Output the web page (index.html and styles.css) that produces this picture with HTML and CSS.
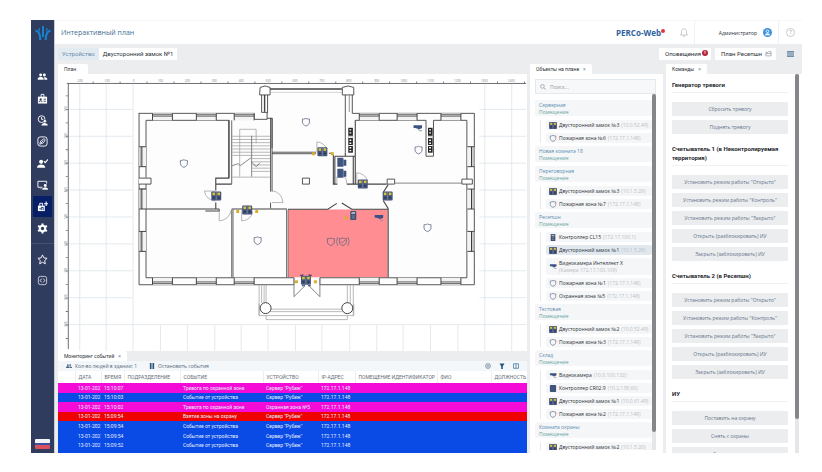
FILE: index.html
```html
<!DOCTYPE html>
<html lang="ru">
<head>
<meta charset="utf-8">
<title>PERCo-Web</title>
<link rel="stylesheet" href="styles.css">
</head>
<body>
<svg class="defs" aria-hidden="true">
  <defs>
    <g id="lock"><rect width="10" height="9" rx="1" fill="#44537a"/><path d="M5 0v9" stroke="#8791ab" stroke-width=".7"/><rect x="1.2" y="1" width="2.6" height="2.6" fill="#d6c53c"/><rect x="6.2" y="1" width="2.6" height="2.6" fill="#d6c53c"/><path d="M1.5 6.2h2M6.500 6.200h2" stroke="#222c4a"/></g>
    <g id="shield"><path d="M4 .5C5.200 1.300 6.500 1.200 7.500 1.200v3.200C7.500 6.300 6 7.400 4 8.200 2 7.400.5 6.300.5 4.400V1.200C1.500 1.200 2.800 1.300 4 .5z" fill="none" stroke="#5b6682" stroke-width=".8"/></g>
    <g id="camera"><path d="M0 .5h8.500v2.700L6 4.500 1.500 3.200H0z" fill="#3d5182"/><path d="M4.500 4.200 6 6h2.500" fill="none" stroke="#8791ab" stroke-width=".9"/></g>
    <g id="controller"><rect width="6" height="9" rx=".8" fill="#42506f"/><rect x="1.200" y="1" width="3.600" height="2" fill="#a9b4c8"/><path d="M1.500 5h3M1.500 7h3" stroke="#8c99b5" stroke-width=".8"/></g>
    <g id="people"><circle cx="4" cy="3" r="2" /><circle cx="9" cy="3" r="2"/><path d="M0 9.500V8c0-3 8-3 8 0v1.500zM9 9.500V8q0-1.300-.9-2.100C10.500 5.700 13 6.500 13 8v1.500z"/></g>
    <g id="alarmdot"><rect x="-1.500" y="-1.500" width="3" height="3" rx=".5" fill="#dcae25"/></g>
    <g id="window-h"><rect width="20" height="7" fill="#f3f3f3"/><path d="M0 0v7M20 0v7" stroke="#444"/><path d="M0 1.500h20" stroke="#333" stroke-width=".9"/><path d="M0 3h20" stroke="#555" stroke-width=".7"/></g>
    <g id="window-v"><rect width="7" height="20" fill="#f3f3f3"/><path d="M0 0h7M0 20h7" stroke="#444"/><path d="M1.200 0v20" stroke="#777" stroke-width=".7"/><path d="M2.800 0v20" stroke="#333"/></g>
    <g id="vents"><rect width="4.600" height="25" fill="#222"/><path d="M1.200 2h1.800M1.200 5h1.800M1.200 12.500h1.800M1.200 15.500h1.800M1.200 20h1.800M1.200 23h1.800" stroke="#fff" stroke-width="1.300"/><path d="M0 8.500h4.600M0 9.800h4.600M0 17.800h4.600" stroke="#fff"/></g>
  </defs>
</svg>
<div class="app">
  <aside class="sidebar">
    <svg class="logo" viewBox="0 0 16 14" aria-hidden="true"><g fill="none" stroke="#1583cf"><path d="M8 0v11" stroke-width="2"/><path d="M.6 4.500C4.200 5.500 5.400 9 5.200 14M15.400 4.500C11.800 5.500 10.600 9 10.800 14" stroke-width="2.200"/><path d="M4.200 2v3.500M11.800 2v3.500" stroke-width="1.200"/></g></svg>
    <nav class="nav" aria-label="Разделы">
      <a href="#" aria-label="Персонал"><svg viewBox="-1 -1 15 12"><use href="#people" fill="#fff"/></svg></a>
      <a href="#" aria-label="Бюро пропусков"><svg viewBox="0 0 12 12"><path d="M1 4h10v7.500H1z" fill="#fff"/><path d="M4.500 5V1.500h3V5" fill="none" stroke="#fff"/><circle cx="4" cy="7" r="1.200" fill="#303c5e"/><path d="M2.300 10c0-2 3.400-2 3.400 0M7.200 6.800h2.500M7.200 9h2.500" fill="none" stroke="#303c5e"/></svg></a>
      <a href="#" aria-label="Контроль доступа"><svg viewBox="0 0 12 12"><circle cx="5" cy="4.500" r="3.700" fill="none" stroke="#fff"/><path d="M5 2.200v2.600h2" fill="none" stroke="#fff"/><circle cx="8.500" cy="6.700" r="1.800" fill="#fff" stroke="#303c5e" stroke-width=".6"/><path d="M4.800 11.500c0-3.800 7-3.800 7 0z" fill="#fff"/></svg></a>
      <a href="#" aria-label="Учёт времени"><svg viewBox="0 0 12 12"><rect x="1" y="1" width="10" height="10" rx="2.500" fill="none" stroke="#fff"/><path d="M3 9 4 5.500 7.500 3l1.500 1-2 3.500zM4 8l3-3" fill="none" stroke="#fff" stroke-width=".9"/></svg></a>
      <a href="#" aria-label="Верификация"><svg viewBox="0 0 12 12"><circle cx="4.500" cy="4" r="2.200" fill="#fff"/><path d="M0 10.500c0-4.500 9-4.500 9 0z" fill="#fff"/><path d="M7.500 3.500 9 5l3-3.500" fill="none" stroke="#fff" stroke-width="1.200"/></svg></a>
      <a href="#" aria-label="Мониторинг"><svg viewBox="0 0 12 12"><path d="M6 9H1V2.500h9.500V5" fill="none" stroke="#fff"/><circle cx="9" cy="7" r="1.600" fill="#fff"/><path d="M6 11.500c0-3 6-3 6 0zM3 10.500h3" fill="#fff" stroke="#fff" stroke-width=".4"/></svg></a>
      <a href="#" class="active" aria-current="page" aria-label="Интерактивный план"><svg viewBox="0 0 12 12"><path d="M1 5h7.500v6H1z" fill="#fff"/><path d="M3 5V2.500h3V5" fill="none" stroke="#fff"/><path d="M2.500 8.500h1.700M4.700 10V7h2v3" stroke="#061f66" fill="none" stroke-width=".9"/><path d="M10 .5v5M7.500 3h5" stroke="#fff" stroke-width="1.200"/></svg></a>
      <a href="#" aria-label="Настройки"><svg viewBox="0 0 12 12"><circle cx="6" cy="6" r="3" fill="none" stroke="#fff" stroke-width="2.300"/><path d="M6 .5v2M6 9.500v2M1.200 3.200l1.800 1M9 7.800l1.800 1M1.200 8.800 3 7.800M9 4.200l1.800-1" stroke="#fff" stroke-width="2.200"/></svg></a>
    </nav>
    <nav class="nav nav-extra" aria-label="Дополнительно">
      <a href="#" aria-label="Избранное"><svg viewBox="0 0 12 12"><path d="m6 1 1.500 3.200 3.500.5-2.600 2.400.7 3.600L6 9l-3.100 1.700.7-3.600L1 4.700l3.500-.5z" fill="none" stroke="#fff" stroke-linejoin="round"/></svg></a>
      <a href="#" aria-label="Разработчику"><svg viewBox="0 0 12 12"><rect x="1.500" y="1.500" width="9" height="9" rx="2.200" fill="none" stroke="#dfe3ec" stroke-width=".9"/><path d="M5 4 3.500 6 5 8M7 4l1.500 2L7 8" fill="none" stroke="#fff" stroke-width=".9"/></svg></a>
    </nav>
    <button class="flag" type="button" aria-label="Язык"></button>
  </aside>

  <div class="workspace">
    <header class="header">
      <h1>Интерактивный план</h1>
      <div class="brand">PERCo-Web<i></i></div>
      <button class="bell" type="button" aria-label="Уведомления"><svg viewBox="0 0 8 9"><path d="M.5 7h7L6.500 5.500V3.500c0-3.500-5-3.500-5 0v2zM3 8.300h2" fill="none" stroke="#b5bac2" stroke-width=".8"/></svg></button>
      <button class="user" type="button">Администратор<svg viewBox="0 0 10 10"><circle cx="5" cy="5" r="5" fill="#3f93de"/><circle cx="5" cy="3.700" r="1.500" fill="none" stroke="#fff" stroke-width=".9"/><path d="M2.300 8c0-3 5.400-3 5.400 0z" fill="#fff"/></svg></button>
      <button class="help" type="button" aria-label="Справка">?</button>
    </header>

    <div class="toolbar">
      <div class="crumbs"><span class="crumb-label">Устройство</span><span>Двусторонний замок №1</span></div>
      <button class="chip" type="button">Оповещения<b>1</b></button>
      <button class="chip chip-plan" type="button">План Ресепшн<svg viewBox="0 0 8 7"><path d="M1 1.500h2.500l.7-.8H7v5H1zM1 3h6" fill="none" stroke="#7c8896" stroke-width=".7"/></svg></button>
      <button class="burger" type="button" aria-label="Меню"><svg viewBox="0 0 7 6"><path d="M0 .8h7M0 3h7M0 5.200h7" stroke="#466f92" stroke-width="1.200"/></svg></button>
    </div>

    <main class="columns">
      <div class="left">
        <section class="plan">
          <h2 class="tab">План</h2>
          <svg class="plan-canvas" viewBox="58 73 469 278" preserveAspectRatio="xMidYMin meet" role="img" aria-label="План этажа">
            <g stroke="#dce3ea" stroke-width=".8" fill="none">
              <path d="M79 83v268M105.500 83v268M132.500 83v268M485.500 83v268M512.500 83v268"/>
              <path d="M67 108.500h65M67 135.500h65M67 162.500h65M67 189.500h65M67 216.500h65M67 243.500h65M67 270.500h65M67 297.500h65M67 324.500h460"/>
              <path d="M480 108.500h47M480 135.500h47M480 162.500h47M480 189.500h47M480 216.500h47M480 243.500h47M480 270.500h47M480 297.500h47"/>
              <path d="M160 325v26M187 325v26M214.500 325v26M241 325v26M268 325v26M295.500 325v26M322 325v26M350 325v26M377 325v26M403.500 325v26M431 325v26M458.500 325v26"/>
            </g>
            <path d="M66 82.500h461M67.500 82v267" stroke="#6b6e73" fill="none"/>
            <path d="M92 81.500h435" stroke="#666" stroke-width="2" stroke-dasharray=".8 26.260"/>
            <path d="M66 94.500v255" stroke="#666" stroke-width="2" stroke-dasharray=".8 12.730"/>
            <g class="ruler">
              <text x="79" y="81">-200</text><text x="106" y="81">-100</text><text x="133" y="81">0</text><text x="160" y="81">100</text><text x="187" y="81">200</text><text x="214" y="81">300</text><text x="241" y="81">400</text><text x="268" y="81">500</text><text x="295" y="81">600</text><text x="322" y="81">700</text><text x="349" y="81">800</text><text x="377" y="81">900</text><text x="404" y="81">1000</text><text x="431" y="81">1100</text><text x="458" y="81">1200</text><text x="485" y="81">1300</text><text x="512" y="81">1400</text>
              <text transform="translate(66 108)rotate(-90)">100</text><text transform="translate(66 135)rotate(-90)">200</text><text transform="translate(66 162)rotate(-90)">300</text><text transform="translate(66 189)rotate(-90)">400</text><text transform="translate(66 216)rotate(-90)">500</text><text transform="translate(66 243)rotate(-90)">600</text><text transform="translate(66 270)rotate(-90)">700</text><text transform="translate(66 297)rotate(-90)">800</text><text transform="translate(66 324)rotate(-90)">900</text>
            </g>
            <path d="M138.500 112.500H254V118h8V93h-3v-8h11v3h72v-3h12v9h-2v18h123v172H138.500z" fill="#fdfdfd"/>
            <rect x="288" y="209" width="100" height="68" fill="#ff8d92"/>
            <g fill="none" stroke="#444" stroke-width=".9">
              <path d="M138.500 112.500H267M138.500 112v172.500H294M320 284.500h155V112.500H352.500"/>
              <path d="M145.500 119.500H229M145.500 119.500V177M145.500 183.500V277.500H294M320 277.500h147.500V119.500H434M426.500 119.500H355.500"/>
              <path d="M254 112.500v6h13v-7h-5.500V94M267.500 94v18M260 86.500q5-3 10 0v7.500h-10.500z" fill="#fff"/>
              <path d="M345.500 94v58M352.500 94v18.500M342.500 86.500q6-3 11.500 0V94H342.500z" fill="#fff"/>
              <path d="M270 88h72" stroke-width="1.500"/><path d="M270 91.500h72" stroke="#bbb" stroke-width=".6"/>
              <path d="M264.500 94v17" stroke-width="1.400"/><path d="M349.500 94v17" stroke="#888"/>
              <path d="M138.500 177.500h12v6h-12M138.500 188.500h7M473 178.500h-10.500v5H473zM387.500 178.500h7.500v5h-7.500zM302.500 177.500h7v6h-7z" fill="#fff"/>
              <path d="M145.500 208.500H219M231.500 208.500H287M219 208.500v2h-14M215.500 190v-12.500h13V119.500M215.500 183.500h16M215.500 202v6.500" stroke-width="1.100"/>
              <path d="M229 119.500v58M231.500 119.500v64M231.500 209v68M232.800 209v68" stroke="#555"/>
              <path d="M286.500 209v68M288 209v68" stroke="#666"/>
              <path d="M270.500 117v74M272 117v74M270.500 202v6M272 151.500h44M272 153h44M333 152.500h-4"/>
              <path d="M267 117.500h5v30" />
              <path d="M333.500 154v29.500h4M335 155.500v28M335 155.500h20.500M353.500 155.500v28M355.500 119.500v64M347 183.500H387M345.500 152v3" stroke-width="1.100"/>
              <path d="M395 182.500h68" stroke="#777"/>
              <path d="M426.500 119.500v36h7.500v-36"/>
              <path d="M388.500 184l-5 8M383.500 200l5 8v69M288 208.800h40l9-6M342 202.500l10 6.300h36.500" stroke-width="1.100"/>
              <path d="M294 277.500v19l11-11M320 277.500v19l-11-11M294 284.500v-7M320 284.500v-7" stroke="#777"/>
            </g>
            <g>
              <use href="#window-h" x="152" y="112.500"/><use href="#window-h" x="196" y="112.500"/><use href="#window-h" x="234" y="112.500"/>
              <use href="#window-h" x="359.500" y="112.500"/><use href="#window-h" x="397.500" y="112.500"/><use href="#window-h" x="441.500" y="112.500"/>
              <use href="#window-h" transform="translate(152 284.500)scale(1 -1)"/><use href="#window-h" transform="translate(196 284.500)scale(1 -1)"/><use href="#window-h" transform="translate(234 284.500)scale(1 -1)"/>
              <use href="#window-h" transform="translate(359.500 284.500)scale(1 -1)"/><use href="#window-h" transform="translate(397.500 284.500)scale(1 -1)"/><use href="#window-h" transform="translate(441.500 284.500)scale(1 -1)"/>
              <use href="#window-v" x="138.500" y="146"/><use href="#window-v" x="138.500" y="188.500"/><use href="#window-v" x="138.500" y="231"/>
              <use href="#window-v" transform="translate(475 146)scale(-1 1)"/><use href="#window-v" transform="translate(475 188.500)scale(-1 1)"/><use href="#window-v" transform="translate(475 231)scale(-1 1)"/>
              <use href="#vents" x="348.500" y="127"/><use href="#vents" x="428.500" y="127"/>
            </g>
            <g fill="none" stroke="#999" stroke-width=".7">
              <path d="M239.500 176V128.500h16.500v14M232 135.500h38M232 138.700h38M232 141.900h38M232 145.100h38M232 148.300h38M232 151.500h38M232 154.700h38M252 157.900h18M252 161.100h18M252 164.300h18M252 167.500h18M252 170.700h18M232 176.500h38"/>
              <path d="M251.500 135v41M232 165l6-2 2 2 11-8M251 161l5 5 4-4" stroke="#555"/>
              <path d="M204 190.500h11M204 190.500q2 9 11 10M219 209v11.500q10-1 12.500-12M241.500 210v10.500q10-1 11-9.500M272 190q10 2 11 12h-11M317 152v-11q7 1 10 7M357 183v-11q8 1 11 8M337 183v-7M347 183q0-5-3-8"/>
              <path d="M259 285v30.500M261.500 285v18M264 285v18M266 285v18M347.500 285v18M350.500 285v18M353.500 285v30.500"/>
              <path d="M259 303.500v12h95v-12M270 309h72M270 311.500h72M266 315.500v4h81.500v-4"/>
            </g>
            <g fill="#fff" stroke="#444"><circle cx="265.500" cy="308" r="5.500"/><circle cx="347.500" cy="308" r="5.500"/></g>
            <use href="#shield" x="179.500" y="158.500"/><use href="#shield" x="253.500" y="236"/><use href="#shield" x="302" y="117"/><use href="#shield" x="415" y="145"/><use href="#shield" x="424" y="223"/><use href="#shield" x="327" y="237"/><use href="#shield" x="339" y="237"/>
            <path d="m341 241 1.500 1.500 3-3M338 236.500q-3 4.500 0 9M348 236.500q3 4.500 0 9" fill="none" stroke="#5b6682" stroke-width=".7"/>
            <use href="#camera" x="414" y="124"/><use href="#camera" x="375" y="214"/>
            <use href="#controller" x="350.500" y="210.500"/>
            <use href="#lock" x="211" y="191"/><use href="#lock" x="242" y="205"/><use href="#lock" x="317.500" y="146.500"/><use href="#lock" x="358" y="179"/><use href="#lock" x="383" y="191"/><use href="#lock" x="301" y="275.500"/>
            <path d="M337.500 157h6v2h3v6h-3v1h-6zM337.500 168h6v2h3v6h-3v1h-6z" fill="#40547f"/><path d="M343.500 158v8M343.500 169v8" stroke="#8b98b4" stroke-width=".7"/>
            <path d="M300 275h3v-1M309 274v1h3M302 285.500h3M308 285.500h3" stroke="#303c5e" fill="none"/>
            <use href="#alarmdot" x="237.500" y="211"/><use href="#alarmdot" x="256.500" y="211"/><use href="#alarmdot" x="313.500" y="153"/><use href="#alarmdot" x="332.500" y="153"/><use href="#alarmdot" x="346.500" y="217.500"/><use href="#alarmdot" x="296.500" y="281.500"/><use href="#alarmdot" x="315.500" y="281.500"/>
          </svg>
        </section>

        <section class="events">
          <h2 class="tab">Мониторинг событий<button type="button" aria-label="Закрыть">×</button></h2>
          <div class="events-bar">
            <span class="count"><svg viewBox="0 0 13 10"><use href="#people" fill="#4c6580"/></svg>Кол-во людей в здании: 1</span>
            <button type="button" class="pause"><svg viewBox="0 0 5 6"><path d="M1.200 0v6M3.800 0v6" stroke="#31577c" stroke-width="1.700"/></svg>Остановить события</button>
            <button type="button" class="tool" aria-label="Настройки"><svg viewBox="0 0 6 6"><circle cx="3" cy="3" r="2.400" fill="none" stroke="#6e8293" stroke-width=".8"/><circle cx="3" cy="3" r="1" fill="none" stroke="#6e8293" stroke-width=".7"/></svg></button>
            <button type="button" class="tool" aria-label="Фильтр"><svg viewBox="0 0 6 6"><path d="M.5.5h5L3.800 3.200V6H2.200V3.200z" fill="#24557f"/></svg></button>
            <button type="button" class="tool" aria-label="Столбцы"><svg viewBox="0 0 6 6"><path d="M.5.8h5v4.500h-5zM3 .8v4.500" fill="none" stroke="#4b7ba5" stroke-width=".8"/></svg></button>
          </div>
          <table>
            <colgroup><col class="c-mark"><col class="c-date"><col class="c-time"><col class="c-dept"><col class="c-event"><col class="c-device"><col class="c-ip"><col class="c-room"><col class="c-name"><col class="c-post"></colgroup>
            <thead><tr><th></th><th>ДАТА</th><th>ВРЕМЯ</th><th>ПОДРАЗДЕЛЕНИЕ</th><th>СОБЫТИЕ</th><th>УСТРОЙСТВО</th><th>IP-АДРЕС</th><th>ПОМЕЩЕНИЕ ИДЕНТИФИКАТОР</th><th>ФИО</th><th>ДОЛЖНОСТЬ</th></tr></thead>
            <tbody>
              <tr class="alarm"><td></td><td>13-01-2021</td><td>15:10:07</td><td></td><td>Тревога по охранной зоне</td><td>Сервер "Рубеж"</td><td>172.17.1.148</td><td></td><td></td><td></td></tr>
              <tr><td></td><td>13-01-2021</td><td>15:10:03</td><td></td><td>Событие от устройства</td><td>Сервер "Рубеж"</td><td>172.17.1.148</td><td></td><td></td><td></td></tr>
              <tr class="alarm"><td></td><td>13-01-2021</td><td>15:10:02</td><td></td><td>Тревога по охранной зоне</td><td>Охранная зона №5</td><td>172.17.1.148</td><td></td><td></td><td></td></tr>
              <tr class="armed"><td></td><td>13-01-2021</td><td>15:09:54</td><td></td><td>Взятие зоны на охрану</td><td>Сервер "Рубеж"</td><td>172.17.1.148</td><td></td><td></td><td></td></tr>
              <tr><td></td><td>13-01-2021</td><td>15:09:54</td><td></td><td>Событие от устройства</td><td>Сервер "Рубеж"</td><td>172.17.1.148</td><td></td><td></td><td></td></tr>
              <tr><td></td><td>13-01-2021</td><td>15:09:54</td><td></td><td>Событие от устройства</td><td>Сервер "Рубеж"</td><td>172.17.1.148</td><td></td><td></td><td></td></tr>
              <tr><td></td><td>13-01-2021</td><td>15:09:52</td><td></td><td>Событие от устройства</td><td>Сервер "Рубеж"</td><td>172.17.1.148</td><td></td><td></td><td></td></tr>
            </tbody>
          </table>
        </section>
      </div>

      <section class="objects">
        <h2 class="tab">Объекты на плане<button type="button" aria-label="Закрыть">×</button></h2>
        <div class="objects-body">
          <label class="search"><svg viewBox="0 0 7 7"><circle cx="2.800" cy="2.800" r="2.200" fill="none" stroke="#7d8793" stroke-width=".7"/><path d="m4.500 4.500 2 2" stroke="#7d8793" stroke-width=".8"/></svg><input type="text" placeholder="Поиск..." aria-label="Поиск"></label>
          <div class="scroll-area">
            <div class="tree">
              <div class="group"><h3>Серверная<small>Помещение</small></h3>
                <ul><li><svg viewBox="0 0 10 9"><use href="#lock"/></svg>Двусторонний замок №3 <em>(10.0.52.49)</em></li><li><svg viewBox="-1 0 10 9"><use href="#shield"/></svg>Пожарная зона №6 <em>(172.17.1.148)</em></li></ul></div>
              <div class="group"><h3>Новая комната 18<small>Помещение</small></h3></div>
              <div class="group"><h3>Переговорная<small>Помещение</small></h3>
                <ul><li><svg viewBox="0 0 10 9"><use href="#lock"/></svg>Двусторонний замок №3 <em>(10.1.5.29)</em></li><li><svg viewBox="-1 0 10 9"><use href="#shield"/></svg>Пожарная зона №7 <em>(172.17.1.148)</em></li></ul></div>
              <div class="group"><h3>Ресепшн<small>Помещение</small></h3>
                <ul><li><svg viewBox="-2 0 10 9"><use href="#controller"/></svg>Контроллер CL15 <em>(172.17.100.1)</em></li><li class="selected"><svg viewBox="0 0 10 9"><use href="#lock"/></svg>Двусторонний замок №1 <em>(10.1.5.29)</em></li><li class="tall"><svg viewBox="-1 -1 10 9"><use href="#camera"/></svg><span>Видеокамера Интеллект X<br><em>(Камера 172.17.100.109)</em></span></li><li><svg viewBox="-1 0 10 9"><use href="#shield"/></svg>Пожарная зона №1 <em>(172.17.1.148)</em></li><li><svg viewBox="-1 0 10 9"><use href="#shield"/></svg>Охранная зона №5 <em>(172.17.1.148)</em></li></ul></div>
              <div class="group"><h3>Тестовая<small>Помещение</small></h3>
                <ul><li><svg viewBox="0 0 10 9"><use href="#lock"/></svg>Двусторонний замок №2 <em>(10.0.52.49)</em></li><li><svg viewBox="-1 0 10 9"><use href="#shield"/></svg>Пожарная зона №3 <em>(172.17.1.148)</em></li></ul></div>
              <div class="group"><h3>Склад<small>Помещение</small></h3>
                <ul><li><svg viewBox="-1 -1 10 9"><use href="#camera"/></svg>Видеокамера <em>(10.0.100.132)</em></li><li><svg viewBox="0 0 10 9"><rect x="1" width="8" height="9" rx="1" fill="#42537c"/></svg>Контроллер CR02.9 <em>(10.2.138.60)</em></li><li><svg viewBox="0 0 10 9"><use href="#lock"/></svg>Двусторонний замок №1 <em>(10.0.61.49)</em></li><li><svg viewBox="-1 0 10 9"><use href="#shield"/></svg>Пожарная зона №2 <em>(172.17.1.148)</em></li></ul></div>
              <div class="group"><h3>Комната охраны<small>Помещение</small></h3>
                <ul><li><svg viewBox="0 0 10 9"><use href="#lock"/></svg>Двусторонний замок №2 <em>(10.1.5.20)</em></li></ul></div>
            </div>
            <div class="scrollbar"><i></i></div>
          </div>
        </div>
      </section>

      <section class="commands">
        <h2 class="tab">Команды<button type="button" aria-label="Закрыть">×</button></h2>
        <div class="scroll-area">
          <div class="commands-body">
            <h3>Генератор тревоги</h3>
            <div class="buttons"><button type="button">Сбросить тревогу</button><button type="button">Поднять тревогу</button></div>
            <h3>Считыватель 1 (в Неконтролируемая территория)</h3>
            <div class="buttons"><button type="button">Установить режим работы "Открыто"</button><button type="button">Установить режим работы "Контроль"</button><button type="button">Установить режим работы "Закрыто"</button><button type="button">Открыть (разблокировать) ИУ</button><button type="button">Закрыть (заблокировать) ИУ</button></div>
            <h3>Считыватель 2 (в Ресепшн)</h3>
            <div class="buttons"><button type="button">Установить режим работы "Открыто"</button><button type="button">Установить режим работы "Контроль"</button><button type="button">Установить режим работы "Закрыто"</button><button type="button">Открыть (разблокировать) ИУ</button><button type="button">Закрыть (заблокировать) ИУ</button></div>
            <h3>ИУ</h3>
            <div class="buttons"><button type="button">Поставить на охрану</button><button type="button">Снять с охраны</button><button type="button">Снять тревогу</button></div>
          </div>
          <div class="scrollbar"><i></i></div>
        </div>
      </section>
    </main>
  </div>
</div>
</body>
</html>
```
FILE: styles.css
```css
* { box-sizing: border-box; }
body {
  margin: 0;
  padding: 20px 20px 19px 31px;
  height: 100vh;
  background: #fff;
  color: #2b2f36;
  font: 5px/8px "Open Sans", "Noto Sans", sans-serif;
}
h1, h2, h3, ul { margin: 0; padding: 0; font: inherit; list-style: none; }
button { margin: 0; padding: 0; border: 0; background: none; color: inherit; font: inherit; cursor: pointer; }
em, small { font: inherit; }
svg { display: block; flex: none; }
.defs { position: absolute; width: 0; height: 0; }

.app { display: flex; height: 100%; }

.sidebar { display: flex; flex-direction: column; align-items: center; width: 24px; padding-top: 6px; background: #303c5e; border-right: 1px solid #c9ced6; }
.logo { width: 16px; height: 14px; margin-bottom: 26px; }
.nav { display: grid; grid-auto-rows: 1fr; width: 19px; height: 173px; }
.nav a { display: grid; place-items: center; }
.nav svg { width: 11px; height: 11px; }
.nav .active { background: #061f66; }
.nav-extra { width: 100%; height: 53px; margin-top: 4px; padding: 5px 0; border-top: 1px solid #46516f; }
.flag { width: 15px; height: 10px; margin-top: auto; margin-bottom: 4px; border-radius: 1px; background: linear-gradient(#f4f4f8 0 36%, #3d50a0 36% 62%, #d9505f 62%); }

.workspace { display: flex; flex: 1; flex-direction: column; min-width: 0; background: #ebedef; }
.header { display: flex; align-items: center; height: 24px; padding-left: 6px; background: #fff; border-top: 1px solid #f6f7f8; }
.header h1 { flex: 1; color: #466c93; font-size: 7px; }
.brand { display: flex; margin-right: 8px; color: #2f62a0; font-size: 8px; font-weight: 700; }
.brand i { width: 4px; height: 4px; border-radius: 50%; background: #e5343b; }
.bell { display: grid; place-items: center; width: 22px; height: 100%; border-right: 1px solid #eff1f3; }
.bell svg { width: 8px; height: 9px; }
.user { display: flex; align-items: center; justify-content: flex-end; gap: 6px; width: 84px; height: 100%; padding-right: 6px; border-right: 1px solid #eff1f3; }
.user svg { width: 9px; height: 9px; }
.help { width: 9px; height: 9px; margin: 0 7px; border: 1px solid #c6cad0; border-radius: 50%; color: #8d939b; line-height: 7px; }

.toolbar { display: flex; align-items: center; gap: 4px; height: 20px; padding: 0 8px 0 3px; font-family: Roboto, "Open Sans", sans-serif; font-size: 6px; }
.crumbs { display: flex; margin-right: auto; background: #fff; line-height: 12px; }
.crumbs span { padding: 0 4px; }
.crumbs .crumb-label { background: #e2ebf2; color: #6b8dab; }
.chip { display: flex; align-items: center; justify-content: space-between; width: 52px; height: 12px; padding: 0 3px 0 6px; border-radius: 1px; background: #fff; }
.chip b { width: 6px; height: 6px; margin-bottom: 3px; border-radius: 50%; background: #b32638; color: #fff; font-size: 4px; line-height: 6px; }
.chip-plan { width: 61px; padding-right: 4px; }
.chip svg { width: 7px; height: 6px; }
.burger { margin-left: 7px; }
.burger svg { width: 7px; height: 6px; }

.columns { display: flex; flex: 1; gap: 3px; min-height: 0; padding-left: 3px; }
.tab { display: flex; align-self: flex-start; gap: 4px; height: 10px; padding: 0 6px; border-radius: 2px 2px 0 0; background: #fff; font-family: Roboto, "Open Sans", sans-serif; line-height: 10px; }
.tab button { color: #7d858f; }
.left, .plan, .events, .objects, .commands { display: flex; flex-direction: column; min-width: 0; }
.left { flex: 1; }
.plan { flex: 1; min-height: 0; }
.plan .tab { padding-right: 12px; }
.plan-canvas { flex: 1; width: 100%; min-height: 0; background: #fff; }
.ruler { fill: #7a7d82; font-size: 3px; text-anchor: middle; }

.events { padding-bottom: 3px; background: linear-gradient(#0a4be6, #0a4be6) bottom / 100% 3px no-repeat; }
.events-bar { display: flex; align-items: center; gap: 8px; height: 10px; padding: 0 8px; background: #f4f7f9; color: #54687c; }
.events-bar span, .pause { display: flex; align-items: center; gap: 3px; }
.events-bar svg { width: 6px; height: 6px; }
.pause { margin: 0 auto 0 4px; }
table { width: 100%; height: 79px; table-layout: fixed; border-collapse: collapse; background: #fff; font-family: Roboto, "Open Sans", sans-serif; line-height: 8px; }
th { height: 12px; padding: 0 0 0 3px; border-left: 1px solid #eceef0; color: #666c74; font-weight: 400; text-align: left; white-space: nowrap; }
th:first-child { border-left: 0; }
td { padding: 0 0 0 3px; overflow: hidden; background: #0a4be6; color: #e8edff; white-space: nowrap; }
.alarm td { background: #f50bd8; }
.armed td { background: #ee0202; }
.c-mark { width: 17px; } .c-date { width: 26px; } .c-time { width: 23px; } .c-dept { width: 56px; } .c-event { width: 83px; }
.c-device { width: 55px; } .c-ip { width: 37px; } .c-room { width: 82px; } .c-name { width: 54px; } .c-post { width: 36px; }

.objects { width: 133px; }
.objects-body { display: flex; flex: 1; flex-direction: column; min-height: 0; padding: 5px 7px 3px 5px; background: #fff; }
.search { display: flex; align-items: center; gap: 4px; height: 15px; padding: 0 4px; border: 1px solid #e4e9ed; background: #f6f8fa; }
.search svg { width: 6px; height: 6px; }
.search input { flex: 1; min-width: 0; padding: 0; border: 0; outline: 0; background: none; font: inherit; }
.search input::placeholder { color: #8f98a3; }
.scroll-area { display: flex; flex: 1; min-height: 0; }
.scrollbar { width: 4px; background: #e6e6e8; }
.scrollbar i { display: block; height: 95%; border-radius: 2px; background: #85868a; }
.tree { flex: 1; min-width: 0; padding-top: 6px; overflow: hidden; }
.tree h3 { height: 16px; margin-bottom: 4px; padding: 2px 4px 0; border-radius: 2px; background: #f5f6f7; color: #5a8db3; line-height: 7px; }
.tree small { display: block; color: #66a3a3; }
.tree ul { margin-left: 5px; border-left: 1px solid #e7eaed; }
.tree li { display: flex; align-items: center; height: 10px; margin: 0 0 3px 5px; padding-left: 3px; border-radius: 2px; background: #f5f6f7; line-height: 7px; white-space: nowrap; }
.tree li svg { width: 8px; height: 7px; margin-right: 2px; }
.tree li em { margin-left: 2px; color: #b9bdc3; }
.tree li span em { margin: 0; }
.tree .tall { height: 17px; }
.tree .selected { background: #e1e9ef; }

.commands { width: 136px; }
.commands .scroll-area { background: #fff; }
.commands-body { flex: 1; min-width: 0; padding: 6px 7px 0 6px; overflow: hidden; }
.commands h3 { margin-bottom: 9px; padding-bottom: 3px; border-bottom: 1px solid #eef0f2; color: #22262c; font-family: Roboto, "Open Sans", sans-serif; font-size: 6px; font-weight: 700; line-height: 9px; }
.buttons { display: grid; gap: 4px; margin-bottom: 10px; }
.buttons button { height: 14px; border-radius: 1px; background: #ebedef; color: #66758a; }
.commands .scrollbar { margin-right: 3px; }
.commands .scrollbar i { height: 91%; }
```
